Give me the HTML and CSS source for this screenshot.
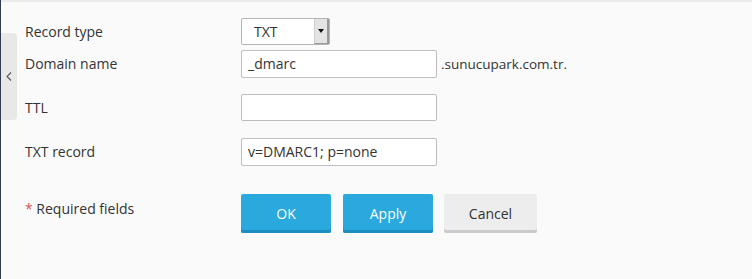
FILE: index.html
```html
<!DOCTYPE html>
<html>
<head>
<meta charset="utf-8">
<link rel="stylesheet" href="styles.css">
</head>
<body>
<div class="page">
  <div class="sidebar-edge"></div>
  <div class="main">
    <div class="topstrip"></div>
    <div class="content">
      <div class="toggle-tab">
        <svg width="6" height="9" viewBox="0 0 6 9"><path d="M5 0.5 L1 4.5 L5 8.5" fill="none" stroke="#555" stroke-width="1.1"/></svg>
      </div>
      <form class="form">
        <div class="row row-type">
          <label class="label">Record type</label>
          <div class="field">
            <div class="select">
              <span class="select-value">TXT</span>
              <span class="select-arrow"><span class="tri"></span></span>
            </div>
          </div>
        </div>
        <div class="row row-domain">
          <label class="label">Domain name</label>
          <div class="field">
            <div class="input">_dmarc</div>
            <span class="suffix">.sunucupark.com.tr.</span>
          </div>
        </div>
        <div class="row row-ttl">
          <label class="label">TTL</label>
          <div class="field">
            <div class="input"></div>
          </div>
        </div>
        <div class="row row-txt">
          <label class="label">TXT record</label>
          <div class="field">
            <div class="input">v=DMARC1; p=none</div>
          </div>
        </div>
        <div class="row row-buttons">
          <div class="label required"><span class="star">*</span> Required fields</div>
          <div class="buttons">
            <button type="button" class="btn btn-primary">OK</button>
            <button type="button" class="btn btn-primary btn-apply">Apply</button>
            <button type="button" class="btn btn-default">Cancel</button>
          </div>
        </div>
      </form>
    </div>
  </div>
</div>
</body>
</html>
```

FILE: styles.css
```css
html, body {
  margin: 0;
  padding: 0;
  background: #fafafa;
}
body {
  font-family: "Open Sans", "Liberation Sans", sans-serif;
  font-size: 14px;
  color: #333;
  width: 752px;
  height: 279px;
  overflow: hidden;
}
.page {
  display: flex;
  height: 279px;
}
.sidebar-edge {
  width: 1px;
  background: #2f3e4f;
  flex: none;
}
.main {
  flex: 1;
  display: flex;
  flex-direction: column;
}
.topstrip {
  height: 2px;
  background: #ebebeb;
}
.content {
  position: relative;
  flex: 1;
  padding: 16px 0 0 24px;
}
.toggle-tab {
  position: absolute;
  left: 0;
  top: 31px;
  width: 16px;
  height: 87px;
  background: #e8e8e8;
  border-radius: 0 4px 4px 0;
  display: flex;
  align-items: center;
  justify-content: center;
}
.toggle-tab svg {
  margin-left: -1px;
}
.form {
  display: flex;
  flex-direction: column;
}
.row {
  display: flex;
  align-items: center;
}
.label {
  width: 216px;
  flex: none;
  line-height: 20px;
}
.field {
  display: flex;
  align-items: center;
}
.row-domain { margin-top: 5px; }
.row-ttl { margin-top: 16px; }
.row-txt { margin-top: 17px; }
.row-buttons { margin-top: 28px; align-items: flex-start; }
.required { padding-top: 5px; }
.star { color: #d9534f; }

.select {
  width: 89px;
  height: 27px;
  box-sizing: border-box;
  border: 1px solid #b5b5b5;
  border-radius: 2px;
  background: #fff;
  display: flex;
}
.select-value {
  flex: 1;
  padding-left: 12px;
  line-height: 25px;
}
.select-arrow {
  width: 12px;
  background: #e4e4e4;
  border-left: 1px solid #cfcfcf;
  border-right: 2px solid #9a9a9a;
  border-bottom: 1px solid #9a9a9a;
  display: flex;
  align-items: center;
  justify-content: center;
}
.tri {
  width: 0;
  height: 0;
  border-left: 3px solid transparent;
  border-right: 3px solid transparent;
  border-top: 4px solid #111;
}
.input {
  width: 196px;
  height: 28px;
  box-sizing: border-box;
  border: 1px solid #bdbdbd;
  border-radius: 2px;
  background: #fff;
  padding: 0 6px;
  line-height: 26px;
  color: #333;
}
.row-ttl .input { height: 27px; }
.suffix {
  margin-left: 4px;
  font-size: 13.5px;
}
.buttons {
  display: flex;
  gap: 12px;
}
.btn {
  font-family: "Open Sans", "Liberation Sans", sans-serif;
  font-size: 14px;
  height: 39px;
  border: none;
  border-radius: 2px;
  padding: 0;
  margin: 0;
  cursor: pointer;
}
.btn-primary {
  width: 90px;
  background: #29a9de;
  color: #fff;
  box-shadow: inset 0 -3px 0 #1d8ec0;
}
.btn-apply { margin-left: 0; }
.btn-default {
  width: 93px;
  margin-left: -1px;
  background: #ededed;
  color: #333;
  box-shadow: inset 0 -3px 0 #cbcbcb;
}
```
